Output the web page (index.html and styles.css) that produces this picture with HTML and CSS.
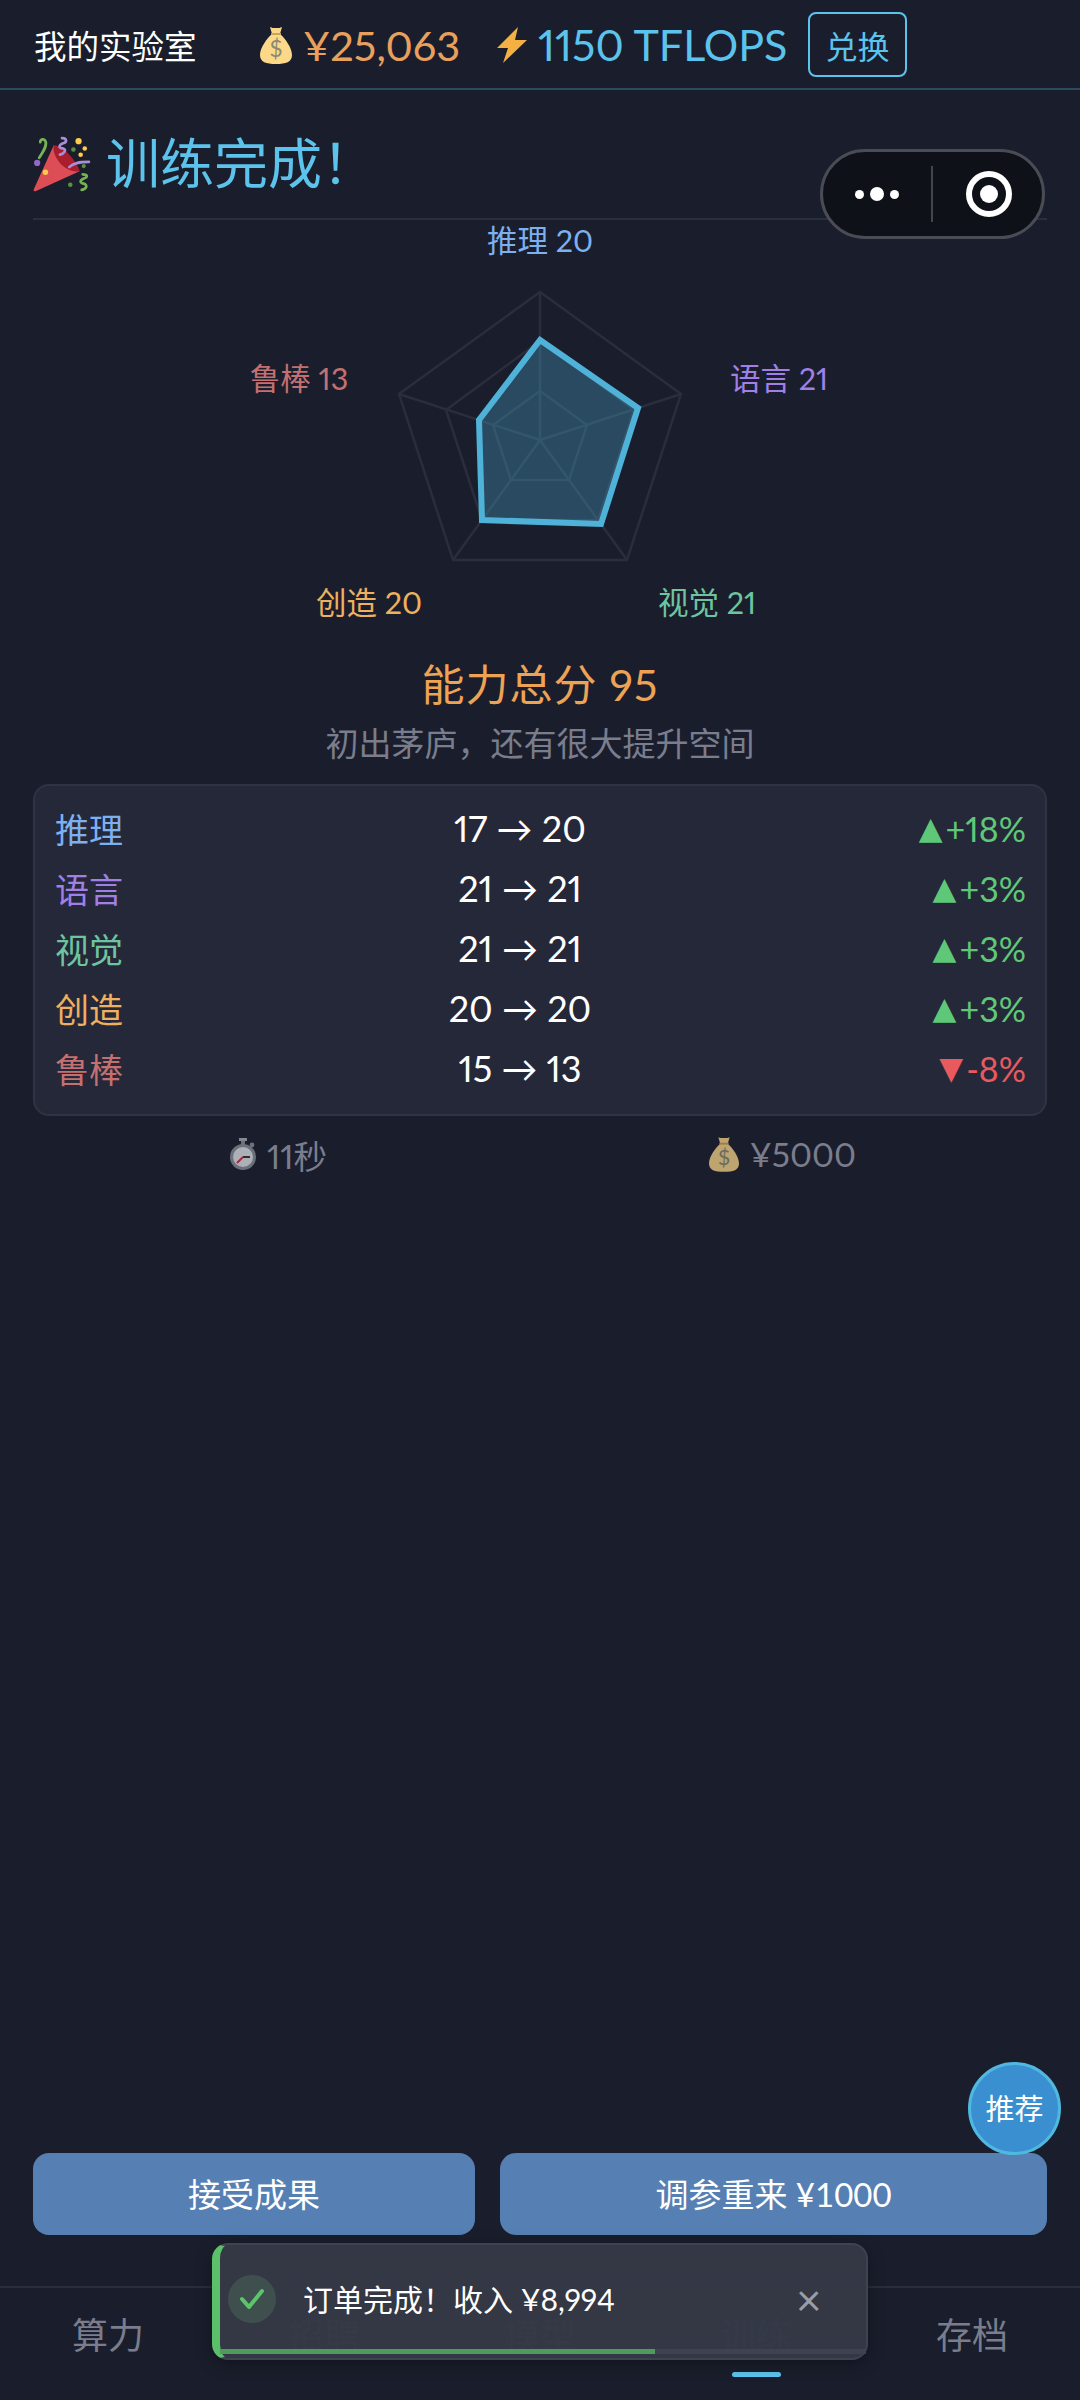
FILE: index.html
```html
<!DOCTYPE html>
<html lang="zh-CN">
<head>
  <meta charset="UTF-8" />
  <title>我的实验室</title>
  <link rel="stylesheet" href="styles.css">
</head>
<body>
  <div class="page">
    <header class="topbar">
      <span class="lab-name">我的实验室</span>
      <svg class="ic-bag" width="32" height="38" viewBox="0 0 32 38">
        <path fill="#fdd888" d="M10 1c2 1 3 1 6 1s4 0 6-1l-2 7c5 4 12 14 12 21 0 7-6 9-16 9S0 36 0 29C0 22 7 12 12 8z" />
        <path fill="none" stroke="#c9a45c" stroke-width="2" d="M11 8h10" />
        <text class="bag-sign" x="16" y="31" text-anchor="middle">$</text>
      </svg>
      <span class="money">¥25,063</span>
      <svg class="ic-bolt" width="30" height="36" viewBox="0 0 30 36"><path fill="#f5b042" d="M21 0 0 21h11L6 36l24-23H18z" /></svg>
      <span class="flops">1150 TFLOPS</span>
      <span class="exchange">兑换</span>
    </header>

    <main class="content">
      <h1 class="title">
        <svg class="popper" width="58" height="58" viewBox="0 0 56 56">
          <path fill="#dd4d55" d="M20 10 45 35 3 54c-2 1-3 0-2-2z" />
          <path fill="#a81e2c" d="M20 10c5 0 11 4 16 10s9 12 9 15c-6 1-14-2-19-8S19 15 20 10z" />
          <g fill="none" stroke-linecap="round" stroke-width="2.6">
            <path stroke="#77b255" d="M6 22c4-6 8-12 6-16-1-3-5-2-5 1" />
            <path stroke="#aa8dd8" d="M28 3c5 0 5 4 1 5-5 2-4 5 0 5 4 1 1 5-3 6" />
            <path stroke="#aa8dd8" d="M35 31c4-4 9-5 19-5" />
            <path stroke="#77b255" d="M48 38c5 0 5 3 1 4-4 2-4 4 0 5 4 1 3 5-2 6" />
          </g>
          <g fill="#ffcc4d">
            <circle cx="44" cy="6" r="3" /><circle cx="50" cy="13" r="2.2" /><circle cx="46" cy="19" r="2.2" /><circle cx="12" cy="36" r="2.6" />
          </g>
          <g fill="#5c913b">
            <circle cx="39" cy="14" r="2.2" /><circle cx="49" cy="30" r="2" /><circle cx="36" cy="48" r="2.2" />
          </g>
          <circle cx="4" cy="27" r="3" fill="#9266cc" />
        </svg>
        <span>训练完成！</span>
      </h1>

      <svg class="radar" width="1014" height="435" viewBox="0 0 1014 435">
        <g class="grid">
          <polygon points="507,72 648,174 594,340 420,340 366,174" />
          <polygon points="507,121 601,190 565,300 449,300 413,190" />
          <polygon points="507,171 554,205 536,260 478,260 460,205" />
          <line x1="507" y1="220" x2="507" y2="72" />
          <line x1="507" y1="220" x2="648" y2="174" />
          <line x1="507" y1="220" x2="594" y2="340" />
          <line x1="507" y1="220" x2="420" y2="340" />
          <line x1="507" y1="220" x2="366" y2="174" />
        </g>
        <polygon class="shape" points="507,120 605,188 568,304 449,300 446,200" />
        <text class="rl c-logic" x="507" y="20" text-anchor="middle">推理 20</text>
        <text class="rl c-lang" x="746" y="158" text-anchor="middle">语言 21</text>
        <text class="rl c-vision" x="674" y="382" text-anchor="middle">视觉 21</text>
        <text class="rl c-create" x="336" y="382" text-anchor="middle">创造 20</text>
        <text class="rl c-robust" x="266" y="158" text-anchor="middle">鲁棒 13</text>
      </svg>

      <div class="score">能力总分 95</div>
      <div class="comment">初出茅庐，还有很大提升空间</div>

      <div class="panel">
        <div class="row"><span class="c-logic">推理</span><span class="val">17 → 20</span><span class="up"><i>▲</i>+18%</span></div>
        <div class="row"><span class="c-lang">语言</span><span class="val">21 → 21</span><span class="up"><i>▲</i>+3%</span></div>
        <div class="row"><span class="c-vision">视觉</span><span class="val">21 → 21</span><span class="up"><i>▲</i>+3%</span></div>
        <div class="row"><span class="c-create">创造</span><span class="val">20 → 20</span><span class="up"><i>▲</i>+3%</span></div>
        <div class="row"><span class="c-robust">鲁棒</span><span class="val">15 → 13</span><span class="down"><i>▼</i>-8%</span></div>
      </div>

      <div class="stats">
        <span class="stat">
          <svg class="dim" width="26" height="32" viewBox="0 0 26 32">
            <rect x="9" y="0" width="8" height="3" fill="#aab2b8" />
            <rect x="11" y="3" width="4" height="4" fill="#8a9298" />
            <circle cx="22" cy="7" r="2.4" fill="#8a9298" />
            <circle cx="13" cy="19" r="13" fill="#8a9298" />
            <circle cx="13" cy="19" r="10" fill="#e6e9ec" />
            <path fill="none" stroke="#dd2e44" stroke-width="2" d="M13 19 7 25" />
            <path fill="none" stroke="#31373d" stroke-width="2" d="M13 19h7" />
          </svg>
          11秒
        </span>
        <span class="stat">
          <svg class="dim" width="30" height="38" viewBox="0 0 32 38">
            <path fill="#fdd888" d="M10 1c2 1 3 1 6 1s4 0 6-1l-2 7c5 4 12 14 12 21 0 7-6 9-16 9S0 36 0 29C0 22 7 12 12 8z" />
            <path fill="none" stroke="#c9a45c" stroke-width="2" d="M11 8h10" />
            <text class="bag-sign" x="16" y="31" text-anchor="middle">$</text>
          </svg>
          ¥5000
        </span>
      </div>
    </main>

    <div class="actions">
      <button class="btn btn-accept">接受成果</button>
      <button class="btn btn-retry">调参重来 ¥1000</button>
    </div>

    <nav class="tabs">
      <div class="tab">算力</div>
      <div class="tab">招聘</div>
      <div class="tab">模型</div>
      <div class="tab active">训练</div>
      <div class="tab">存档</div>
    </nav>

    <!-- 悬浮层 -->
    <div class="capsule">
      <span class="dots"><b></b><b class="mid"></b><b></b></span>
      <span class="sep"></span>
      <span class="target"></span>
    </div>

    <div class="fab">推荐</div>

    <div class="toast">
      <span class="check">
        <svg width="26" height="22" viewBox="0 0 26 22"><path fill="none" stroke="#5cc46a" stroke-width="4" stroke-linecap="round" stroke-linejoin="round" d="M3 11l7 8L23 3" /></svg>
      </span>
      <span class="toast-text">订单完成！收入 ¥8,994</span>
      <span class="close">×</span>
      <div class="track"><div class="progress"></div></div>
    </div>
  </div>
</body>
</html>
```

FILE: styles.css
```css
* {
  box-sizing: border-box;
}

body {
  margin: 0;
  background: #1a1e2c;
  font-family: Lato, "Noto Sans CJK SC", sans-serif;
  font-variant-numeric: proportional-nums;
}

.page {
  position: relative;
  display: flex;
  flex-direction: column;
  width: 1080px;
  height: 2400px;
  overflow: hidden;
}

/* 顶部 */
.topbar {
  display: flex;
  align-items: center;
  height: 90px;
  padding: 1px 0 0 34px;
  border-bottom: 2px solid #2a4a5e;
}

.lab-name {
  width: 163px;
  margin-right: 63px;
  font-size: 32.5px;
  color: #fff;
  white-space: nowrap;
}

.ic-bag {
  margin-right: 11px;
}

.bag-sign {
  font-size: 23px;
  fill: #8b8a72;
}

.money {
  width: 157px;
  margin-right: 37px;
  font-size: 41.5px;
  color: #e8a05c;
  white-space: nowrap;
}

.ic-bolt {
  margin-right: 11px;
}

.flops {
  width: 250px;
  margin-right: 20px;
  font-size: 43px;
  color: #5cc4ec;
  white-space: nowrap;
}

.exchange {
  display: flex;
  align-items: center;
  justify-content: center;
  width: 99px;
  height: 65px;
  border: 2px solid #5cc4ec;
  border-radius: 8px;
  font-size: 32px;
  color: #5cc4ec;
}

/* 主体 */
.content {
  flex: 1;
  padding: 0 33px;
}

.title {
  display: flex;
  align-items: center;
  gap: 15px;
  height: 130px;
  margin: 0;
  padding: 12px 0 0;
  border-bottom: 2px solid #2a2f3f;
  font-size: 54px;
  font-weight: 400;
  color: #5cc4ec;
}

.popper {
  margin-top: 8px;
}

.radar {
  display: block;
}

.grid polygon,
.grid line {
  fill: none;
  stroke: #2a2e3c;
  stroke-width: 2.5;
}

.shape {
  fill: rgba(76, 180, 220, 0.3);
  stroke: #4fb3d9;
  stroke-width: 6;
}

.rl {
  font-size: 30.5px;
  dominant-baseline: central;
  fill: currentColor;
}

.c-logic { color: #7db0ee; }
.c-lang { color: #a07fe6; }
.c-vision { color: #6fc4a0; }
.c-create { color: #efb060; }
.c-robust { color: #c47070; }

.score {
  height: 60px;
  font-size: 43px;
  letter-spacing: 1px;
  line-height: 60px;
  text-align: center;
  color: #eea254;
}

.comment {
  height: 44px;
  margin: 6px 0 19px;
  font-size: 33px;
  line-height: 44px;
  text-align: center;
  color: #7a7d8c;
}

.panel {
  padding: 12px 19px 16px 20px;
  background: #252839;
  border: 2px solid #2f3344;
  border-radius: 16px;
}

.row {
  display: grid;
  grid-template-columns: 300px 330px 1fr;
  align-items: center;
  height: 60px;
  font-size: 34px;
}

.val {
  font-size: 36px;
  text-align: center;
  color: #fff;
}

.up,
.down {
  font-size: 34px;
  text-align: right;
}

.up { color: #5fc878; }
.down { color: #e85a5e; }

.up i,
.down i {
  margin-right: 3px;
  font-style: normal;
  font-family: "DejaVu Sans", sans-serif;
  font-size: 31px;
  line-height: 1;
  vertical-align: 3px;
}

.stats {
  display: flex;
  justify-content: space-around;
  margin-top: 16px;
  padding-left: 6px;
}

.stat {
  display: flex;
  align-items: center;
  gap: 11px;
  height: 44px;
  font-size: 33.5px;
  color: #7a7d8c;
}

.dim {
  opacity: 0.72;
}

/* 底部按钮 */
.actions {
  display: flex;
  gap: 25px;
  margin: 0 33px 51px;
}

.btn {
  height: 82px;
  padding: 0 0 2px;
  border: none;
  border-radius: 16px;
  background: #5680b3;
  font-family: inherit;
  font-size: 33px;
  color: #fff;
}

.btn-accept { width: 442px; }
.btn-retry { flex: 1; }

.tabs {
  display: flex;
  height: 114px;
  padding-top: 29px;
  border-top: 2px solid #2a2d3b;
}

.tab {
  position: relative;
  flex: 1;
  height: 36px;
  font-size: 36px;
  line-height: 36px;
  text-align: center;
  color: #7a7d8c;
}

.tab.active {
  color: #5cc4ec;
}

.tab.active::after {
  content: "";
  position: absolute;
  left: 50%;
  bottom: -24px;
  width: 49px;
  height: 5px;
  margin-left: -24px;
  border-radius: 3px;
  background: #5cc4ec;
}

/* 胶囊 */
.capsule {
  position: absolute;
  top: 149px;
  left: 820px;
  display: flex;
  align-items: center;
  width: 225px;
  height: 90px;
  background: #0f1118;
  border: 3px solid #4a4c55;
  border-radius: 45px;
}

.dots {
  display: flex;
  align-items: center;
  justify-content: center;
  gap: 6px;
  width: 108px;
}

.dots b {
  width: 9px;
  height: 9px;
  border-radius: 50%;
  background: #fff;
}

.dots b.mid {
  width: 14px;
  height: 14px;
}

.sep {
  width: 2px;
  height: 56px;
  background: #44464e;
}

.target {
  position: relative;
  width: 46px;
  height: 46px;
  margin-left: 33px;
  border: 6px solid #fff;
  border-radius: 50%;
}

.target::after {
  content: "";
  position: absolute;
  top: 8px;
  left: 8px;
  width: 18px;
  height: 18px;
  border-radius: 50%;
  background: #fff;
}

.fab {
  position: absolute;
  top: 2062px;
  left: 968px;
  display: flex;
  align-items: center;
  justify-content: center;
  width: 93px;
  height: 93px;
  padding-bottom: 3px;
  background: #3a8fd0;
  border: 3px solid #4fb8e0;
  border-radius: 50%;
  font-size: 29px;
  color: #fff;
}

.toast {
  position: absolute;
  top: 2243px;
  left: 212px;
  display: flex;
  align-items: center;
  width: 656px;
  height: 117px;
  padding: 0 0 6px 8px;
  background: rgba(53, 56, 69, 0.985);
  border: 2px solid #3f4250;
  border-left: 8px solid #5cbf6a;
  border-radius: 16px;
  box-shadow: 0 4px 16px rgba(0, 0, 0, 0.35);
}

.check {
  display: flex;
  align-items: center;
  justify-content: center;
  width: 48px;
  height: 48px;
  margin-right: 27px;
  border-radius: 50%;
  background: #3f4f4e;
}

.toast-text {
  font-size: 30px;
  line-height: 30px;
  color: #fff;
}

.close {
  width: 70px;
  margin-left: auto;
  font-size: 44px;
  line-height: 44px;
  color: #9a9ca6;
}

.track {
  position: absolute;
  left: 0;
  right: 0;
  bottom: 4px;
  height: 5px;
  background: #3f4250;
}

.progress {
  width: 435px;
  height: 5px;
  background: #519a5e;
}
```
